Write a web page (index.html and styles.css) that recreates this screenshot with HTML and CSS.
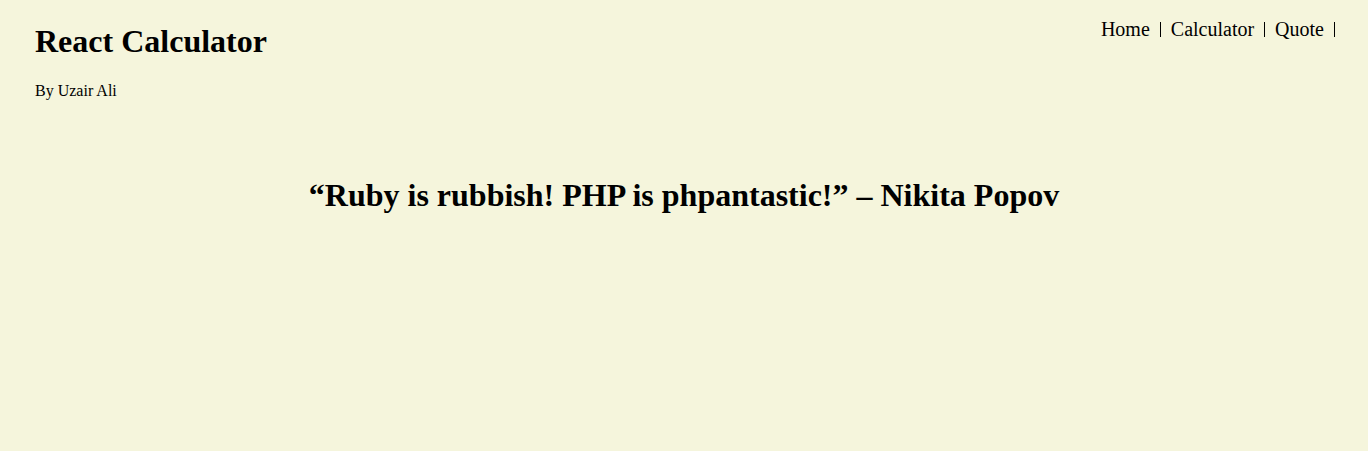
FILE: index.html
```html
<!DOCTYPE html>
<html lang="en">
<head>
  <meta charset="utf-8">
  <meta name="viewport" content="width=device-width, initial-scale=1">
  <title>React Calculator</title>
  <link rel="stylesheet" href="styles.css">
</head>
<body>
  <header class="header">
    <div class="brand">
      <h1 class="brand-title">React Calculator</h1>
      <p class="brand-author">By Uzair Ali</p>
    </div>
    <nav class="nav" aria-label="Main">
      <ul class="nav-list">
        <li class="nav-item"><a class="nav-link" href="#home">Home</a></li>
        <li class="nav-item"><a class="nav-link" href="#calculator">Calculator</a></li>
        <li class="nav-item"><a class="nav-link" href="#quote">Quote</a></li>
      </ul>
    </nav>
  </header>
  <main class="main">
    <h1 class="quote">“Ruby is rubbish! PHP is phpantastic!” – Nikita Popov</h1>
  </main>
</body>
</html>
```

FILE: styles.css
```css
body {
  margin: 0;
  min-height: 100vh;
  background: beige;
  color: #000;
  font-family: "Liberation Serif", "Times New Roman", serif;
  font-size: 16px;
}

.header {
  display: flex;
  justify-content: space-between;
  align-items: flex-start;
  padding: 0 33px 0 35px;
}

.brand {
  padding-top: 23px;
}

.brand-title {
  margin: 0 0 22px;
  font-size: 32px;
  line-height: 37px;
}

.brand-author {
  margin: 0;
  line-height: 18px;
}

.nav {
  padding-top: 22px;
}

.nav-list {
  display: flex;
  gap: 10px;
  margin: 0;
  padding: 0;
  list-style: none;
}

.nav-item {
  padding-right: 10px;
  border-right: 1px solid #000;
  font-size: 20px;
  line-height: 15px;
}

.nav-link {
  color: inherit;
  text-decoration: none;
}

.main {
  padding: 77px 16px 0;
  text-align: center;
}

.quote {
  margin: 0;
  font-size: 32px;
  line-height: 37px;
}
```
